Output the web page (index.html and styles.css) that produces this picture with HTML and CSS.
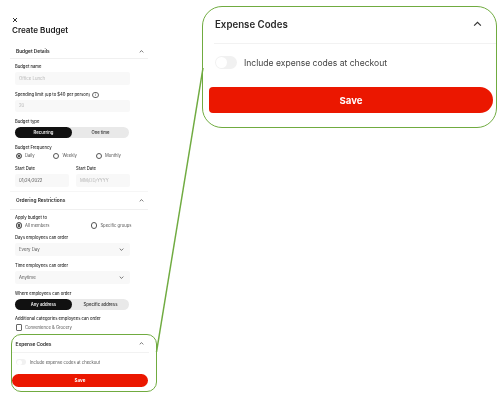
FILE: index.html
```html
<!DOCTYPE html>
<html lang="en">
<head>
    <meta charset="UTF-8">
    <meta name="viewport" content="width=device-width, initial-scale=1.0">
    <title>Create Budget</title>
    <link rel="stylesheet" href="styles.css">
</head>
<body>
    <div class="canvas">
        <main class="form-panel">
            <svg class="close-icon" viewBox="0 0 6 6"><path d="M1 1l4 4M5 1L1 5"/></svg>
            <h1>Create Budget</h1>

            <div class="section-head first">
                <h2>Budget Details</h2>
                <svg class="chevron" viewBox="0 0 8 5"><path d="M1 4l3-3 3 3"/></svg>
            </div>

            <div class="field first-field">
                <label>Budget name</label>
                <div class="input muted">Office Lunch</div>
            </div>
            <div class="field">
                <label>Spending limit (up to $40 per person) <span class="info">i</span></label>
                <div class="input muted">20</div>
            </div>
            <div class="field">
                <label>Budget type</label>
                <div class="segment">
                    <span class="segment-on">Recurring</span>
                    <span class="segment-off">One time</span>
                </div>
            </div>
            <div class="field">
                <label>Budget Frequency</label>
                <div class="radios">
                    <span class="radio daily checked">Daily</span>
                    <span class="radio weekly">Weekly</span>
                    <span class="radio">Monthly</span>
                </div>
            </div>
            <div class="date-row">
                <div class="date-field">
                    <label>Start Date</label>
                    <div class="input">01/24/2022</div>
                </div>
                <div class="date-field">
                    <label>Start Date</label>
                    <div class="input muted">MM/DD/YYYY</div>
                </div>
            </div>

            <div class="section-head">
                <h2>Ordering Restrictions</h2>
                <svg class="chevron" viewBox="0 0 8 5"><path d="M1 4l3-3 3 3"/></svg>
            </div>

            <div class="field first-field">
                <label>Apply budget to</label>
                <div class="radios">
                    <span class="radio members checked">All members</span>
                    <span class="radio">Specific groups</span>
                </div>
            </div>
            <div class="field">
                <label>Days employees can order</label>
                <div class="input select">Every Day
                    <svg class="chevron" viewBox="0 0 8 5"><path d="M1 1l3 3 3-3"/></svg>
                </div>
            </div>
            <div class="field">
                <label>Time employees can order</label>
                <div class="input select">Anytime
                    <svg class="chevron" viewBox="0 0 8 5"><path d="M1 1l3 3 3-3"/></svg>
                </div>
            </div>
            <div class="field">
                <label>Where employees can order</label>
                <div class="segment">
                    <span class="segment-on">Any address</span>
                    <span class="segment-off">Specific address</span>
                </div>
            </div>
            <div class="field">
                <label>Additional categories employees can order</label>
                <div class="check-row"><span class="checkbox"></span>Convenience &amp; Grocery</div>
            </div>

            <section class="expense-small">
                <div class="expense-head">
                    <h2>Expense Codes</h2>
                    <svg class="chevron" viewBox="0 0 8 5"><path d="M1 4l3-3 3 3"/></svg>
                </div>
                <div class="expense-toggle">
                    <span class="switch"></span>
                    Include expense codes at checkout
                </div>
                <button class="save">Save</button>
            </section>
        </main>

        <aside class="callout">
            <div class="callout-head">
                <h2>Expense Codes</h2>
                <svg class="callout-chevron" viewBox="0 0 8 5"><path d="M1 4l3-3 3 3"/></svg>
            </div>
            <div class="callout-toggle">
                <span class="callout-switch"></span>
                Include expense codes at checkout
            </div>
            <button class="callout-save">Save</button>
        </aside>

        <svg class="connector" viewBox="0 0 504 405"><path d="M203 68L156.500 352"/></svg>
    </div>
</body>
</html>
```

FILE: styles.css
```css
/* General */
body {
    margin: 0;
    background: #fff;
    font-family: "Inter", "Liberation Sans", sans-serif;
    color: #2a2a2a;
}

.canvas {
    position: relative;
    display: flex;
    align-items: flex-start;
    width: 504px;
    height: 405px;
    overflow: hidden;
}

/* Left form */
.form-panel {
    width: 158px;
    flex-shrink: 0;
    padding: 17px 0 0 15px;
    box-sizing: border-box;
    filter: blur(0.4px);
}

.close-icon {
    display: block;
    width: 6px;
    height: 6px;
    margin: 0 0 1px -3px;
}

.close-icon path,
.chevron path,
.callout-chevron path {
    fill: none;
    stroke: #333;
    stroke-width: 1;
}

h1 {
    margin: 0 0 0 -3px;
    height: 12px;
    font-size: 8.100px;
    line-height: 12px;
    font-weight: 600;
    color: #222;
}

h2 {
    margin: 0;
    font-size: 4.800px;
    font-weight: 600;
}

.section-head {
    display: flex;
    align-items: center;
    justify-content: space-between;
    height: 19px;
    width: 138px;
    margin: 4px 0 0 -5px;
    padding: 0 4.500px 0 6px;
    box-sizing: border-box;
    border-top: 1px solid #f6f6f6;
    border-bottom: 1px solid #f0f0f0;
}

.section-head.first {
    height: 15px;
    margin-top: 8px;
    border-top: none;
}

.chevron {
    width: 5px;
    height: 3px;
}

.chevron path {
    stroke-width: 1.100;
}

.field {
    margin-top: 6.800px;
}

.field.first-field {
    margin-top: 5px;
}

label {
    display: block;
    height: 6px;
    font-size: 4.200px;
    line-height: 6px;
    font-weight: 500;
    margin-bottom: 2px;
    white-space: nowrap;
}

.info {
    display: inline-block;
    width: 4.500px;
    height: 4.500px;
    margin-left: 1px;
    border: 0.5px solid #666;
    border-radius: 50%;
    font-size: 3px;
    line-height: 4.500px;
    text-align: center;
    vertical-align: middle;
}

.input {
    display: flex;
    align-items: center;
    width: 115px;
    height: 12.800px;
    padding-left: 4px;
    box-sizing: border-box;
    border-radius: 2px;
    background: #f8f8f8;
    font-size: 4.300px;
    color: #555;
}

.input.muted {
    color: #b5b5b5;
}

.select {
    justify-content: space-between;
    padding-right: 6px;
}

.segment {
    display: flex;
    width: 114px;
    height: 11px;
    border-radius: 5.500px;
    background: #e9e9e9;
    font-size: 4.200px;
    font-weight: 600;
}

.segment span {
    display: flex;
    align-items: center;
    justify-content: center;
    width: 50%;
    border-radius: 5.500px;
}

.segment-on {
    background: #111;
    color: #eee;
}

.segment-off {
    color: #444;
}

.radios {
    display: flex;
    height: 6px;
    padding-left: 0.500px;
    font-size: 4.200px;
    color: #555;
}

.radio {
    display: flex;
    align-items: center;
    gap: 3px;
}

.radio::before {
    content: "";
    width: 4.400px;
    height: 4.400px;
    border: 0.5px solid #555;
    border-radius: 50%;
}

.radio.checked::before {
    background: #555;
    box-shadow: inset 0 0 0 0.8px #fff;
}

.radio.daily {
    width: 37.500px;
}

.radio.weekly {
    width: 42.500px;
}

.radio.members {
    width: 75.500px;
}

.date-row {
    display: flex;
    gap: 7px;
    margin-top: 6.800px;
}

.date-field .input {
    width: 54px;
}

.check-row {
    display: flex;
    align-items: center;
    gap: 3px;
    height: 6px;
    padding-left: 0.500px;
    font-size: 4.200px;
    color: #555;
}

.checkbox {
    width: 4.400px;
    height: 4.400px;
    border: 0.5px solid #666;
    border-radius: 1px;
}

/* Small expense box, green outline */
.expense-small {
    width: 146px;
    height: 57.500px;
    margin: 4px 0 0 -4px;
    box-sizing: border-box;
    border: 1.600px solid #70ab40;
    border-radius: 10px;
}

.expense-head {
    display: flex;
    align-items: center;
    justify-content: space-between;
    width: 137px;
    height: 18px;
    padding: 0 5.500px 0 3.500px;
    box-sizing: border-box;
    border-bottom: 1px solid #f2f2f2;
}

.expense-toggle {
    display: flex;
    align-items: center;
    gap: 4px;
    height: 6px;
    margin: 6px 0 0 4px;
    font-size: 4.200px;
    color: #555;
}

.switch {
    width: 10px;
    height: 6px;
    border-radius: 3px;
    background: #f1f1f1;
}

.switch::before,
.callout-switch::before {
    content: "";
    display: block;
    border-radius: 50%;
    background: #fff;
}

.switch::before {
    width: 5px;
    height: 5px;
    margin: 0.5px;
}

.save {
    display: block;
    width: 136px;
    height: 13px;
    margin: 9px 0 0 0;
    padding: 0;
    border: none;
    border-radius: 6.500px;
    background: #eb1700;
    color: #fff;
    font-family: inherit;
    font-size: 4.500px;
    font-weight: 700;
}

/* Enlarged callout */
.callout {
    width: 295px;
    height: 122px;
    margin: 6px 0 0 44px;
    flex-shrink: 0;
    box-sizing: border-box;
    border: 1.600px solid #70ab40;
    border-radius: 20px;
    filter: blur(0.3px);
}

.callout-head {
    display: flex;
    align-items: center;
    justify-content: space-between;
    height: 34px;
    margin-left: 11px;
    padding: 0 14px 2px 1px;
    border-bottom: 1px solid #f2f2f2;
}

.callout-head h2 {
    font-size: 9.700px;
}

.callout-chevron {
    width: 9px;
    height: 6px;
}

.callout-toggle {
    display: flex;
    align-items: center;
    gap: 7px;
    height: 13px;
    margin: 12px 0 0 12px;
    font-size: 8.550px;
    color: #444;
}

.callout-switch {
    width: 22px;
    height: 13px;
    border-radius: 7px;
    background: #f1f1f1;
}

.callout-switch::before {
    width: 11px;
    height: 11px;
    margin: 1px;
}

.callout-save {
    display: block;
    width: 284px;
    height: 26px;
    margin: 18px 0 0 6px;
    padding: 0;
    border: none;
    border-radius: 4px 13px 13px 4px;
    background: #eb1700;
    color: #fff;
    font-family: inherit;
    font-size: 9.600px;
    font-weight: 700;
}

/* Line joining the small box to the callout */
.connector {
    position: absolute;
    top: 0;
    left: 0;
    width: 504px;
    height: 405px;
    pointer-events: none;
}

.connector path {
    fill: none;
    stroke: #70ab40;
    stroke-width: 1.500;
}
```
